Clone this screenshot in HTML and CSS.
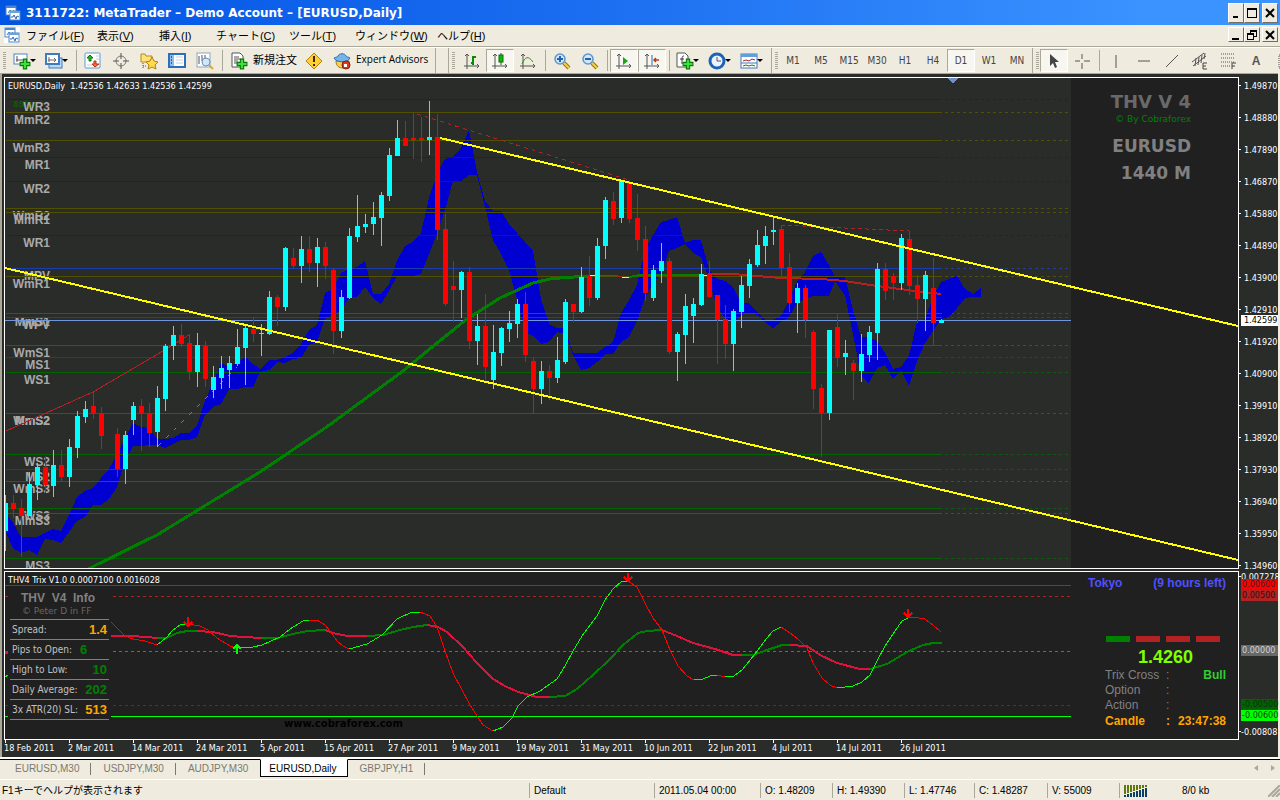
FILE: index.html
```html
<!DOCTYPE html>
<html lang="ja">
<head>
    <meta charset="UTF-8">
    <meta name="viewport" content="width=device-width, initial-scale=1.0">
    <title>3111722: MetaTrader - Demo Account - [EURUSD,Daily]</title>
    <link rel="stylesheet" href="styles.css">
</head>
<body>
    <svg class="defs" aria-hidden="true">
        <symbol id="app" viewBox="0 0 16 16">
            <rect x="1" y="1" width="10" height="9" fill="#fff" stroke="#4a86c8"/>
            <rect x="1" y="1" width="10" height="2" fill="#4a86c8"/>
            <path d="M3 8l2-3 2 2 2-2" fill="none" stroke="#4a86c8"/>
            <rect x="5" y="6" width="10" height="9" fill="#fff" stroke="#4a86c8"/>
            <rect x="5" y="6" width="10" height="2" fill="#6ba3dc"/>
            <path d="M6 12h2l1-2 2 4 1-3 2 1" fill="none" stroke="#2b66aa"/>
        </symbol>
        <symbol id="plus" viewBox="0 0 11 11">
            <path d="M4 1h3v3h3v3H7v3H4V7H1V4h3z" fill="#3ee03e" stroke="#0a7a0a"/>
        </symbol>
        <symbol id="axes" viewBox="0 0 18 18">
            <path d="M4 2v15M1 14h15M2 4l2-2 2 2M14 12l2 2-2 2" fill="none" stroke="#555"/>
        </symbol>
        <symbol id="lens" viewBox="0 0 18 18">
            <path d="M11 11l5 5" stroke="#9a7410" stroke-width="4"/>
            <path d="M11 11l5 5" stroke="#f5cf4a" stroke-width="2"/>
            <circle cx="7" cy="7" r="5" fill="#cfe6fb" stroke="#5b97d0" stroke-width="1.500"/>
        </symbol>
    </svg>

    <header class="titlebar">
        <svg class="app-icon" viewBox="0 0 16 16"><use href="#app"/></svg>
        <h1>3111722: MetaTrader – Demo Account – [EURUSD,Daily]</h1>
        <div class="window-buttons">
            <button aria-label="Minimize"><svg viewBox="0 0 12 12"><path d="M3 9h5v2H3z"/></svg></button>
            <button aria-label="Maximize"><svg viewBox="0 0 12 12"><path d="M1 1h10v10H1zM2 3v7h8V3z" fill-rule="evenodd"/></svg></button>
            <button class="close" aria-label="Close"><svg viewBox="0 0 12 12"><path d="M2 2l8 8M10 2l-8 8" stroke="#000" stroke-width="2"/></svg></button>
        </div>
    </header>

    <nav class="menubar">
        <svg class="app-icon boxed" viewBox="0 0 16 16"><use href="#app"/></svg>
        <div class="menus">
            <button>ファイル(<u>F</u>)</button>
            <button>表示(<u>V</u>)</button>
            <button>挿入(<u>I</u>)</button>
            <button>チャート(<u>C</u>)</button>
            <button>ツール(<u>T</u>)</button>
            <button>ウィンドウ(<u>W</u>)</button>
            <button>ヘルプ(<u>H</u>)</button>
        </div>
        <div class="window-buttons small">
            <button aria-label="Minimize chart"><svg viewBox="0 0 12 12"><path d="M2 9h7v2H2z"/></svg></button>
            <button aria-label="Restore chart"><svg viewBox="0 0 12 12"><path d="M4 1h7v7H8V7h2V3H5v1H4zM1 4h7v7H1zM2 6v4h5V6z" fill-rule="evenodd"/></svg></button>
            <button class="close" aria-label="Close chart"><svg viewBox="0 0 12 12"><path d="M2 2l8 8M10 2l-8 8" stroke="#000" stroke-width="2"/></svg></button>
        </div>
    </nav>

    <div class="toolbar">
        <div class="group">
            <button class="drop" aria-label="New chart"><svg viewBox="0 0 18 18"><rect x="1" y="2" width="13" height="10" fill="#fff" stroke="#4a86c8"/><path d="M4 4v6M3 8h8" stroke="#555"/><use href="#plus" x="6" y="6" width="12" height="12"/></svg></button>
            <button class="drop" aria-label="Profiles"><svg viewBox="0 0 18 18"><rect x="4" y="6" width="13" height="10" fill="#bcd8f4" stroke="#3d7cc0"/><rect x="1" y="2" width="13" height="10" fill="#fff" stroke="#3d7cc0" stroke-width="2"/><path d="M4 5v5M3 8h8M9 6l2 2-2 2" fill="none" stroke="#666"/></svg></button>
            <i class="sep"></i>
            <button aria-label="Market watch"><svg viewBox="0 0 18 18"><rect x="1" y="1" width="15" height="15" rx="1" fill="#fff" stroke="#5b9bdc"/><path d="M3 4h4M3 13h5M12 4h3M12 7h3" stroke="#c9ccd4"/><path d="M6 3l3 3H7v3H5V6H3z" fill="#25b525" stroke="#0e7a0e"/><path d="M11 15l-3-3h2V9h2v3h3z" fill="#f06a42" stroke="#b8371a"/></svg></button>
            <button aria-label="Data window"><svg viewBox="0 0 18 18"><circle cx="9" cy="9" r="5" fill="none" stroke="#777"/><path d="M9 1v6M9 11v6M1 9h6M11 9h6" stroke="#555"/></svg></button>
            <button aria-label="Navigator"><svg viewBox="0 0 18 18"><path d="M1 2h4l1 2h6v6H1z" fill="#ffe27a" stroke="#b98a1a"/><path d="M3 11v6M3 14h3" stroke="#555" stroke-dasharray="1 1"/><path d="M12 5l2 4 4 1-3 3 1 4-4-2-4 2 1-4-3-3 4-1z" fill="#ffdc4e" stroke="#b07e10"/></svg></button>
            <button aria-label="Terminal"><svg viewBox="0 0 18 18"><rect x="1" y="2" width="16" height="13" fill="#fff" stroke="#2f6fb8" stroke-width="2"/><path d="M2 3h4v11H2z" fill="#8fbdf0"/><path d="M3 5h1M3 8h1M3 11h1" stroke="#000"/><path d="M8 5h7M8 8h7M8 11h7" stroke="#c5cfdb"/></svg></button>
            <button aria-label="Strategy tester"><svg viewBox="0 0 18 18"><rect x="1" y="1" width="13" height="14" fill="#fff" stroke="#8aa7c8"/><path d="M3 4v8M6 3v6M9 3v4" stroke="#555"/><path d="M13 13l4 4" stroke="#e0a92a" stroke-width="2"/><circle cx="10" cy="10" r="4" fill="#cfe6fb" stroke="#6b8fb5"/></svg></button>
            <i class="sep"></i>
            <button class="wide order"><svg viewBox="0 0 18 18"><path d="M2 1h8l3 3v11H2z" fill="#fff" stroke="#555"/><path d="M4 5h5M4 7h7M4 9h4M4 11h4" stroke="#555"/><use href="#plus" x="6" y="6" width="12" height="12"/></svg><span>新規注文</span></button>
            <button aria-label="MetaEditor"><svg viewBox="0 0 18 18"><path d="M9 1l8 8-8 8-8-8z" fill="#ffcf33" stroke="#b58411"/><path d="M9 4v6M9 12v2" stroke="#3c2c00" stroke-width="2"/></svg></button>
            <button class="wide experts"><svg viewBox="0 0 18 18"><path d="M3 9c0 5 3 7 7 7s6-3 6-7z" fill="#f7cf52" stroke="#a67a12"/><path d="M1 6c2-1 4-1 4-2 1-3 7-3 8 0 0 1 3 1 4 2-2 5-14 5-16 0z" fill="#74b4ea" stroke="#2d6faf"/><circle cx="13" cy="13" r="4" fill="#e03a1a" stroke="#8e1a06"/><path d="M11 12h3v3h-3z" fill="#fff"/></svg><span>Expert Advisors</span></button>
        </div>
        <div class="group charts-group">
            <button aria-label="Bar chart"><svg viewBox="0 0 18 18"><use href="#axes"/><path d="M10 4v9M10 5h3M8 11h2" stroke="#0a8a0a" stroke-width="2"/></svg></button>
            <button class="pressed" aria-label="Candlesticks"><svg viewBox="0 0 18 18"><use href="#axes"/><path d="M10 1v12" stroke="#067006"/><rect x="8" y="3" width="4" height="7" fill="#14b414" stroke="#067006"/></svg></button>
            <button aria-label="Line chart"><svg viewBox="0 0 18 18"><use href="#axes"/><path d="M3 12c3-7 6-9 11-2" fill="none" stroke="#1c9a1c"/></svg></button>
            <i class="sep"></i>
            <button aria-label="Zoom in"><svg viewBox="0 0 18 18"><use href="#lens"/><path d="M4 7h6M7 4v6" stroke="#2563a8" stroke-width="2"/></svg></button>
            <button aria-label="Zoom out"><svg viewBox="0 0 18 18"><use href="#lens"/><path d="M4 7h6" stroke="#2563a8" stroke-width="2"/></svg></button>
            <i class="sep"></i>
            <button class="pressed" aria-label="Auto scroll"><svg viewBox="0 0 18 18"><use href="#axes"/><path d="M8 5l5 4-5 4z" fill="#19a519"/></svg></button>
            <button class="pressed" aria-label="Chart shift"><svg viewBox="0 0 18 18"><use href="#axes"/><path d="M9 3v10" stroke="#2a6ab0"/><path d="M16 8h-5M13 6l-2 2 2 2" fill="none" stroke="#c03a10" stroke-width="1.500"/></svg></button>
            <i class="sep"></i>
            <button class="drop" aria-label="Indicators"><svg viewBox="0 0 18 18"><path d="M1 1h8l3 3v11H1z" fill="#fff" stroke="#555"/><path d="M8 4c-2 0-2 1-2 8M4 7h4" fill="none" stroke="#333"/><use href="#plus" x="6" y="6" width="12" height="12"/></svg></button>
            <button class="drop" aria-label="Periods"><svg viewBox="0 0 18 18"><circle cx="9" cy="9" r="7" fill="#e9f4ff" stroke="#1f63b8" stroke-width="3"/><path d="M9 5v4h4" fill="none" stroke="#555"/></svg></button>
            <button class="drop" aria-label="Templates"><svg viewBox="0 0 18 18"><rect x="1" y="2" width="16" height="14" fill="#fff" stroke="#3d7cc0"/><path d="M1 2h16v3H1z" fill="#5f9fe0"/><path d="M3 9l3-1 3 1 3-2 3 1" fill="none" stroke="#b52020"/><path d="M1 11h16" stroke="#3d7cc0"/><path d="M3 14l3-1 3 1 3-1 3 1" fill="none" stroke="#128a12"/></svg></button>
        </div>
        <div class="group periods">
            <button>M1</button>
            <button>M5</button>
            <button>M15</button>
            <button>M30</button>
            <button>H1</button>
            <button>H4</button>
            <button class="pressed">D1</button>
            <button>W1</button>
            <button>MN</button>
        </div>
        <div class="group tools">
            <button class="pressed" aria-label="Cursor"><svg viewBox="0 0 18 18"><path d="M5 2v12l3-3 2 5 2-1-2-5h4z" fill="#444"/></svg></button>
            <button aria-label="Crosshair"><svg viewBox="0 0 18 18"><path d="M9 2v5M9 11v6M2 9h5M11 9h6" stroke="#555"/></svg></button>
            <i class="sep"></i>
            <button aria-label="Vertical line"><svg viewBox="0 0 18 18"><path d="M9 3v13" stroke="#555"/></svg></button>
            <button aria-label="Horizontal line"><svg viewBox="0 0 18 18"><path d="M3 9h12" stroke="#555"/></svg></button>
            <button aria-label="Trendline"><svg viewBox="0 0 18 18"><path d="M3 15L15 3" stroke="#555"/></svg></button>
            <button aria-label="Channel"><svg viewBox="0 0 18 18"><path d="M1 10L13 1M2 14L15 4M5 6l-1 8M8 5l-1 8M11 3l-1 8M14 1l-1 6" stroke="#555"/><path d="M12 17v-6h4M12 14h3M12 17h4" fill="none" stroke="#444"/></svg></button>
            <button aria-label="Fibonacci"><svg viewBox="0 0 18 18"><path d="M2 2h14M2 6h14M2 10h14M2 14h9" stroke="#555" stroke-dasharray="1 1"/><path d="M13 17v-6h4M13 14h3" fill="none" stroke="#444"/></svg></button>
            <button aria-label="Text"><b>A</b></button>
            <button aria-label="Text label"><svg viewBox="0 0 18 18"><rect x="4" y="3" width="13" height="13" fill="none" stroke="#555" stroke-dasharray="1 1"/></svg></button>
        </div>
    </div>

    <main class="workspace">
        <section class="pane price-pane">
            <ul class="pivots" id="pivots"></ul>
            <svg class="plot" viewBox="5 78 1233 490" preserveAspectRatio="none">
                <rect x="1071" y="78" width="167" height="490" fill="#202020"/>
                <g id="levels"></g>
                <polygon id="cloud" fill="#0000d0"/>
                <g id="overLevels"></g>
                <g class="ma">
                    <polyline stroke="#008000" stroke-width="3" points="88,569 157,535 260,472 328,426 403,371 437,343 467,319 500,298 533,283 550,279 560,278 589,276"/>
                    <path stroke="#ffff00" stroke-width="1" d="M590 275H596M622 277H629M702 275H708"/>
                    <path stroke="#b22222" stroke-width="1" d="M596 275H614L622 277"/>
                    <path stroke="#008000" stroke-width="2" d="M629 277L640 275H702"/>
                    <polyline stroke="#b22222" stroke-width="2" points="708,274 733,274 757,276 781,278 821,279 845,281 870,285 885,287 915,291 941,294"/>
                </g>
                <g class="trend">
                    <polyline stroke="#b22222" points="6,431 93,392 163,351 189,335"/>
                    <path stroke="#2f8fe8" stroke-dasharray="4 7" d="M158 446L237 367"/>
                    <path stroke="#b22222" stroke-dasharray="4 4" d="M417 114L629 180"/>
                    <path stroke="#b22222" stroke-dasharray="4 3" d="M781 225L909 231"/>
                </g>
                <g id="candles"></g>
                <g class="channel">
                    <path d="M440 138L1238 326"/>
                    <path d="M5 268L1238 560"/>
                </g>
                <path d="M947 78h11l-5 5z" fill="#7090c8"/>
            </svg>
            <p class="pane-title">EURUSD,Daily&nbsp; 1.42536 1.42633 1.42536 1.42599</p>
            <div class="watermark">
                <strong>THV V 4</strong>
                <small>© By Cobraforex</small>
                <span>EURUSD</span>
                <span>1440 M</span>
            </div>
        </section>
        <ol class="scale" id="priceScale"></ol>

        <section class="pane trix-pane">
            <svg class="plot" viewBox="5 572 1233 167" preserveAspectRatio="none">
                <g class="guides">
                    <path stroke="#ff0000" d="M5 585.500H1071"/>
                    <path stroke="#b22222" stroke-dasharray="3 3" d="M5 596.500H1071"/>
                    <path stroke="#696969" stroke-dasharray="3 3" d="M5 651.500H1071"/>
                    <path stroke="#006400" stroke-dasharray="3 3" d="M5 705.500H1071"/>
                    <path stroke="#00ff00" d="M5 716.500H1071"/>
                </g>
                <rect x="8" y="588" width="103" height="137" fill="#202020"/>
                <path d="M5 651h3v3h-3z" fill="#dc143c"/>
                <path d="M5 677l3-2" stroke="#00ff00"/>
                <g id="slow"></g>
                <g id="fast"></g>
                <g class="arrows">
                    <path stroke="#ff0000" d="M188 617v8M184 622l4 4 4-4"/>
                    <path stroke="#ff0000" d="M628 573v8M624 577l4 4 4-4"/>
                    <path stroke="#ff0000" d="M908 609v8M904 613l4 4 4-4"/>
                    <path stroke="#00ff00" d="M237 654v-8M233 649l4-4 4 4"/>
                </g>
            </svg>
            <p class="pane-title">THV4 Trix V1.0 0.0007100 0.0016028</p>
            <div class="info">
                <h2>THV&nbsp; V4&nbsp; Info</h2>
                <small>© Peter D in FF</small>
                <dl>
                    <div><dt>Spread:</dt><dd class="orange">1.4</dd></div>
                    <div class="near"><dt>Pips to Open:</dt><dd>6</dd></div>
                    <div><dt>High to Low:</dt><dd>10</dd></div>
                    <div><dt>Daily Average:</dt><dd>202</dd></div>
                    <div><dt>3x ATR(20) SL:</dt><dd class="orange">513</dd></div>
                </dl>
            </div>
            <p class="site">www.cobraforex.com</p>
            <div class="session">
                <p class="market"><span>Tokyo</span><span>(9 hours left)</span></p>
                <div class="bars"><i class="up"></i><i></i><i></i><i></i></div>
                <p class="quote">1.4260</p>
                <dl>
                    <dt>Trix Cross</dt><dd>:</dd><dd class="bull">Bull</dd>
                    <dt>Option</dt><dd>:</dd><dd></dd>
                    <dt>Action</dt><dd>:</dd><dd></dd>
                    <dt class="candle">Candle</dt><dd class="candle">:</dd><dd class="candle">23:47:38</dd>
                </dl>
            </div>
        </section>
        <ol class="scale trix-scale" id="trixScale"></ol>

        <ol class="dates" id="dates"></ol>
    </main>

    <nav class="tabs">
        <a href="#">EURUSD,M30</a>
        <a href="#">USDJPY,M30</a>
        <a href="#">AUDJPY,M30</a>
        <a href="#" class="active">EURUSD,Daily</a>
        <a href="#">GBPJPY,H1</a>
        <div class="scrollers">
            <button aria-label="Scroll left"><svg viewBox="0 0 6 8"><path d="M5 1v6L1 4z"/></svg></button>
            <button aria-label="Scroll right"><svg viewBox="0 0 6 8"><path d="M1 1v6l4-3z"/></svg></button>
        </div>
    </nav>

    <footer class="statusbar">
        <span class="help">F1キーでヘルプが表示されます</span>
        <span>Default</span>
        <span>2011.05.04 00:00</span>
        <span>O: 1.48209</span>
        <span>H: 1.49390</span>
        <span>L: 1.47746</span>
        <span>C: 1.48287</span>
        <span>V: 55009</span>
        <span class="traffic">
            <svg viewBox="0 0 24 12"><path d="M0 0h2v9H0zM3 0h2v8H3zM6 0h2v7H6zM9 0h2v6H9zM12 0h2v5h-2zM15 0h2v4h-2zM18 0h2v3h-2zM21 0h2v2h-2z" fill="#5f7a0a"/><path d="M0 10h2v2H0zM3 9h2v3H3zM6 8h2v4H6zM9 7h2v5H9zM12 6h2v6h-2zM15 5h2v7h-2zM18 4h2v8h-2zM21 3h2v9h-2z" fill="#0a3f66"/></svg>
            8/0 kb
            <svg class="grip" viewBox="0 0 12 12"><path d="M0 12L12 0M4 12l8-8M8 12l4-4" stroke="#aca899" stroke-width="2"/></svg>
        </span>
    </footer>

    <script src="script.js"></script>
</body>
</html>
```

FILE: styles.css
```css
* {
    box-sizing: border-box;
}
body {
    margin: 0;
    min-height: 100vh;
    display: flex;
    flex-direction: column;
    background: #efebde;
    color: #000;
    font-family: "Liberation Sans", "Noto Sans CJK JP", sans-serif;
    font-size: 10px;
    overflow-x: hidden;
}
h1, h2, p, ul, ol, dl, dd {
    margin: 0;
    padding: 0;
    list-style: none;
}
button {
    margin: 0;
    padding: 0;
    border: 0;
    background: none;
    color: inherit;
    font: inherit;
}
.defs {
    position: absolute;
    width: 0;
    height: 0;
}

/* title and menu */
.titlebar {
    display: flex;
    align-items: center;
    height: 25px;
    padding: 0 2px 0 5px;
    background: linear-gradient(90deg, #0054e3, #1a6df0 45%, #3a93ff 90%);
}
.titlebar h1 {
    flex: 1;
    margin-left: 5px;
    color: #fff;
    font-family: "DejaVu Sans", sans-serif;
    font-size: 12px;
    white-space: pre;
}
.app-icon {
    width: 16px;
    height: 16px;
}
.boxed {
    background: #fff;
}
.window-buttons {
    display: flex;
}
.window-buttons button {
    display: flex;
    align-items: center;
    justify-content: center;
    width: 16px;
    height: 20px;
    background: #efebde;
    border: 1px solid;
    border-color: #fff #716f64 #716f64 #fff;
}
.window-buttons .close {
    margin-left: 2px;
}
.window-buttons svg {
    width: 12px;
    height: 12px;
}
.window-buttons.small button {
    height: 15px;
}
.menubar {
    display: flex;
    align-items: center;
    height: 22px;
    padding: 0 2px 2px 4px;
    border-bottom: 1px solid #aca899;
}
.menus {
    flex: 1;
    display: grid;
    grid-template-columns: 71px 62px 57px 73px 66px 82px auto;
    justify-content: start;
    margin-left: 6px;
    font-size: 11px;
}
.menus button {
    text-align: left;
    white-space: nowrap;
}

/* toolbar */
.toolbar {
    display: flex;
    height: 26px;
    border-top: 1px solid #fff;
    overflow: hidden;
}
.group {
    position: relative;
    display: flex;
    flex: none;
    padding: 1px 3px 1px 9px;
    border-right: 1px solid #aca899;
}
.group::before {
    content: "";
    position: absolute;
    left: 3px;
    top: 4px;
    width: 3px;
    height: 18px;
    background: repeating-linear-gradient(#aca899 0 1px, #efebde 1px 2px);
}
.charts-group {
    margin-left: 12px;
    border-left: 1px solid #aca899;
}
.periods, .tools {
    padding-left: 7px;
    padding-right: 1px;
}
.tools {
    border-right: 0;
}
.group button {
    display: flex;
    flex: none;
    align-items: center;
    justify-content: center;
    width: 28px;
}
.group svg {
    flex: none;
    width: 18px;
    height: 18px;
}
.group .drop {
    width: 32px;
    justify-content: flex-start;
    padding-left: 4px;
}
.drop::after {
    content: "";
    border: 3px solid transparent;
    border-top-color: #000;
    border-bottom: 0;
    margin-left: -1px;
}
.group .wide {
    justify-content: flex-start;
    padding-left: 5px;
    gap: 5px;
    white-space: nowrap;
}
.wide span {
    padding-bottom: 4px;
}
.group .order {
    width: 75px;
}
.group .experts {
    width: 104px;
}
.order span {
    font-size: 11px;
}
.experts span {
    font-family: "Open Sans", sans-serif;
}
.sep {
    flex: none;
    width: 1px;
    margin: 1px 2px 1px 3px;
    background: #aca899;
}
.group .pressed {
    background: #f8f6f0;
    border: 1px solid;
    border-color: #aca899 #fff #fff #aca899;
}
.periods button {
    color: #444;
    font-family: "DejaVu Sans Condensed", "DejaVu Sans", sans-serif;
}
.tools b {
    color: #555;
    font-size: 12px;
}

/* chart workspace */
.workspace {
    flex: 1;
    display: grid;
    grid-template-columns: 1fr 39px;
    grid-template-rows: minmax(0, 492fr) 2px minmax(0, 169fr) 17px;
    padding: 3px 0 0 2px;
    border: solid #aca899;
    border-width: 1px 0 0 2px;
    margin-right: 2px;
    background: #2a2c2a;
    color: #fff;
    font-family: "DejaVu Sans Condensed", "DejaVu Sans", sans-serif;
    font-size: 9px;
    line-height: 12px;
}
.pane {
    position: relative;
    min-height: 0;
    border: 1px solid #fff;
    overflow: hidden;
}
.trix-pane {
    grid-row: 3;
    background: #202020;
}
.plot {
    position: relative;
    display: block;
    width: 100%;
    height: 100%;
    shape-rendering: crispEdges;
}
.plot path, .plot polyline {
    vector-effect: non-scaling-stroke;
}
.ma, .trend, .guides, .arrows, .channel, #slow, #fast {
    fill: none;
}
.channel {
    stroke: #ffff00;
    stroke-width: 2px;
}
#slow {
    stroke-width: 2px;
}
.arrows {
    stroke-width: 2px;
}
.pane-title {
    position: absolute;
    left: 3px;
    top: 2px;
}
.pivots {
    position: absolute;
    left: 0;
    top: 0;
    width: 45px;
    height: 100%;
    color: #a9a9a9;
    font-family: "Liberation Sans", sans-serif;
    font-size: 12px;
    font-weight: bold;
    text-align: right;
}
.pivots li {
    position: absolute;
    right: 0;
    margin-top: -5px;
}
.pivots .mark {
    right: 12px;
    color: #006400;
    font-size: 9px;
}
.watermark {
    position: absolute;
    right: 47px;
    top: 14px;
    display: flex;
    flex-direction: column;
    align-items: flex-end;
    color: #808080;
    font-family: "DejaVu Sans", sans-serif;
    font-size: 17px;
    font-weight: bold;
    line-height: 27px;
}
.watermark strong {
    color: #696969;
    font-size: 18px;
    line-height: 20px;
}
.watermark small {
    margin-bottom: 7px;
    color: #008000;
    font-size: 9px;
    font-weight: normal;
    line-height: 14px;
}
.scale {
    position: relative;
    min-width: 0;
}
.trix-scale {
    grid-row: 3;
}
.scale li {
    position: absolute;
    left: 0;
    width: 100%;
    margin-top: -6px;
    padding-left: 5px;
    white-space: nowrap;
}
.scale .tick::before {
    content: "";
    position: absolute;
    left: 0;
    top: 5px;
    width: 2px;
    height: 1px;
    background: #fff;
}
.scale .tag {
    height: 11px;
    margin-top: -5px;
    left: 2px;
    width: calc(100% - 2px);
    padding-left: 3px;
    line-height: 11px;
}
.trix-scale .tick {
    padding-left: 2px;
}
.trix-scale .tag {
    padding-left: 1px;
}
.dates {
    grid-row: 4;
    display: flex;
    min-width: 0;
}
.dates li {
    position: relative;
    flex: none;
    width: calc(100% * 64 / 1235);
    padding-top: 2px;
    white-space: nowrap;
}
.dates li::before {
    content: "";
    position: absolute;
    left: 1px;
    top: 0;
    width: 1px;
    height: 3px;
    background: #fff;
}

/* info block on the left of the trix pane */
.info {
    position: absolute;
    left: 5px;
    top: 19px;
    width: 101px;
    color: #c0c0c0;
    font-family: "DejaVu Sans", sans-serif;
}
.info h2 {
    padding-left: 11px;
    color: #808080;
    font-family: "Liberation Sans", sans-serif;
    font-size: 12px;
    line-height: 14px;
}
.info small {
    display: block;
    height: 14px;
    padding-left: 12px;
    color: #696969;
    font-size: 9px;
    line-height: 12px;
}
.info dl {
    width: 99px;
    border-top: 1px solid #808080;
}
.info dl div {
    display: flex;
    align-items: center;
    justify-content: space-between;
    height: 20px;
    padding: 0 2px;
    border-bottom: 1px solid #808080;
    white-space: nowrap;
}
.info dl .near {
    justify-content: flex-start;
    gap: 8px;
}
.info dt {
    font-family: "DejaVu Sans Condensed", "DejaVu Sans", sans-serif;
    font-size: 10px;
}
.info dd {
    color: #008000;
    font-family: "Liberation Sans", sans-serif;
    font-size: 13px;
    font-weight: bold;
}
.info .orange {
    color: #ffa500;
}
.site {
    position: absolute;
    left: 279px;
    bottom: 9px;
    color: #000;
    font-family: "DejaVu Sans", sans-serif;
    font-size: 10px;
    font-weight: bold;
}

/* session block on the right */
.session {
    position: absolute;
    right: 12px;
    top: 4px;
    width: 138px;
    font-family: "Liberation Sans", sans-serif;
    font-size: 12px;
    line-height: 15px;
}
.market {
    display: flex;
    justify-content: space-between;
    color: #5050ff;
    font-weight: bold;
}
.bars {
    display: flex;
    justify-content: flex-end;
    gap: 6px;
    margin-top: 45px;
    padding-right: 6px;
}
.bars i {
    width: 24px;
    height: 6px;
    background: #b22222;
}
.bars .up {
    background: #008000;
}
.quote {
    margin: 4px 33px 0 0;
    color: #80ff00;
    font-size: 18px;
    font-weight: bold;
    line-height: 22px;
    text-align: right;
}
.session dl {
    display: grid;
    grid-template-columns: 61px 8px 1fr;
    padding-left: 17px;
    color: #808080;
    grid-auto-rows: 15px;
}
.session dd:nth-of-type(2n) {
    text-align: right;
}
.session .bull {
    color: #32cd32;
    font-weight: bold;
}
.session .candle {
    color: #ffa500;
    font-weight: bold;
    line-height: 17px;
}

/* chart tabs */
.tabs {
    display: flex;
    height: 22px;
    padding: 2px 4px 2px 3px;
    background: linear-gradient(#fff 2px, #000 2px, #000 3px, #efebde 3px);
}
.tabs a {
    position: relative;
    padding: 0 12px;
    color: #7b7970;
    line-height: 19px;
    text-decoration: none;
}
.tabs a::after {
    content: "";
    position: absolute;
    right: 0;
    top: 4px;
    width: 1px;
    height: 12px;
    background: #7b7970;
}
.tabs a:nth-child(3)::after, .tabs .active::after {
    display: none;
}
.tabs .active {
    padding: 0 10px 0 8px;
    background: #fff;
    border: 1px solid #000;
    border-top-color: #fff;
    color: #000;
    line-height: 17px;
}
.scrollers {
    display: flex;
    gap: 11px;
    margin-left: auto;
}
.scrollers svg {
    width: 6px;
    height: 8px;
    fill: #aca899;
}

/* status bar */
.statusbar {
    display: grid;
    grid-template-columns: 1fr 125px 106px 72px 72px 70px 73px 72px 161px;
    height: 21px;
    padding: 3px 0 2px;
    border-top: 1px solid #fff;
    line-height: 15px;
}
.statusbar span {
    padding-left: 4px;
    border-left: 1px solid #aca899;
    white-space: nowrap;
}
.statusbar .help {
    padding-left: 2px;
    border-left: 0;
}
.statusbar .traffic {
    display: flex;
    align-items: center;
    gap: 34px;
}
.traffic svg {
    width: 24px;
    height: 12px;
}
.traffic .grip {
    width: 12px;
    margin-left: auto;
}
```

FILE: script.js
```js
const NS = 'http://www.w3.org/2000/svg';

// x, high, body top, body bottom, low, direction
const candles = [
    [5, 495, 503, 531, 551, 1], [13, 495, 503, 509, 518, 0], [21, 499, 508, 516, 557, 0], [29, 472, 484, 516, 516, 1],
    [37, 463, 467, 485, 500, 1], [45, 456, 467, 485, 493, 0], [53, 450, 465, 486, 497, 1], [61, 450, 465, 477, 481, 0],
    [69, 439, 447, 477, 487, 1], [77, 411, 416, 448, 458, 1], [85, 401, 409, 417, 423, 1], [93, 392, 406, 414, 419, 0],
    [101, 407, 413, 436, 449, 0], [117, 428, 434, 469, 477, 0], [125, 431, 435, 469, 484, 1], [133, 402, 406, 420, 435, 1],
    [141, 399, 406, 414, 451, 0], [149, 403, 413, 433, 447, 0], [157, 386, 398, 432, 447, 1], [165, 344, 346, 399, 411, 1],
    [173, 326, 335, 346, 360, 1], [181, 324, 335, 344, 347, 0], [189, 334, 343, 372, 380, 0], [197, 333, 345, 372, 387, 1],
    [205, 341, 346, 379, 387, 0], [213, 366, 377, 390, 398, 1], [221, 356, 368, 378, 389, 1], [229, 356, 363, 370, 388, 1],
    [237, 329, 347, 364, 366, 1], [245, 324, 328, 348, 385, 1], [253, 317, 329, 334, 342, 0], [261, 324, 333, 334, 356, 1],
    [269, 291, 297, 334, 335, 1], [277, 295, 297, 307, 326, 0], [285, 247, 248, 307, 311, 1], [293, 248, 258, 266, 269, 0],
    [301, 236, 249, 266, 283, 1], [309, 236, 249, 263, 272, 0], [317, 238, 247, 263, 287, 1], [325, 242, 247, 266, 279, 0],
    [333, 268, 270, 331, 354, 0], [341, 290, 297, 331, 338, 1], [349, 228, 236, 298, 299, 1], [357, 195, 226, 237, 242, 1],
    [365, 214, 224, 227, 233, 1], [373, 202, 217, 224, 235, 1], [381, 192, 195, 218, 246, 1], [389, 148, 155, 196, 201, 1],
    [397, 120, 138, 156, 156, 1], [405, 121, 138, 146, 146, 0], [413, 113, 138, 140, 159, 0], [421, 117, 138, 140, 162, 0],
    [429, 101, 137, 140, 155, 1], [437, 114, 137, 230, 240, 0], [445, 214, 229, 304, 306, 0], [453, 261, 286, 290, 322, 0],
    [461, 271, 272, 290, 318, 1], [469, 267, 272, 341, 349, 0], [477, 314, 326, 341, 365, 1], [485, 294, 326, 367, 383, 0],
    [493, 325, 352, 380, 389, 1], [501, 327, 328, 353, 366, 1], [509, 311, 323, 329, 342, 1], [517, 299, 304, 324, 338, 1],
    [525, 292, 304, 355, 362, 0], [533, 357, 361, 389, 414, 0], [541, 361, 371, 389, 404, 1], [549, 365, 371, 378, 400, 0],
    [557, 337, 360, 378, 383, 1], [565, 299, 302, 362, 364, 1], [573, 304, 304, 312, 322, 0], [581, 267, 277, 312, 313, 1],
    [589, 256, 276, 298, 306, 0], [597, 238, 246, 298, 300, 1], [605, 197, 200, 246, 259, 1], [613, 192, 201, 219, 225, 0],
    [621, 180, 181, 218, 223, 1], [629, 180, 182, 219, 223, 0], [637, 194, 218, 240, 251, 0], [645, 226, 239, 293, 301, 0],
    [653, 265, 270, 298, 301, 1], [661, 243, 261, 271, 283, 1], [669, 258, 261, 352, 354, 0], [677, 332, 334, 352, 381, 1],
    [685, 294, 306, 335, 364, 1], [693, 298, 304, 316, 343, 1], [701, 264, 274, 305, 306, 1], [709, 261, 274, 297, 298, 0],
    [717, 295, 295, 320, 364, 0], [725, 305, 319, 344, 359, 0], [733, 309, 311, 344, 371, 1], [741, 276, 285, 312, 328, 1],
    [749, 259, 264, 286, 298, 1], [757, 230, 245, 265, 267, 1], [765, 226, 236, 246, 264, 1], [773, 216, 230, 232, 245, 1],
    [781, 225, 229, 268, 278, 0], [789, 253, 267, 303, 312, 0], [797, 283, 288, 303, 333, 1], [805, 285, 288, 320, 338, 0],
    [813, 330, 332, 389, 409, 0], [821, 384, 388, 413, 457, 0], [829, 330, 330, 413, 420, 1], [837, 314, 327, 358, 367, 0],
    [845, 340, 353, 357, 375, 1], [853, 360, 363, 371, 400, 0], [861, 334, 354, 371, 382, 1], [869, 326, 332, 355, 362, 1],
    [877, 263, 269, 333, 360, 1], [885, 263, 269, 291, 300, 0], [893, 273, 276, 283, 300, 0], [901, 234, 238, 283, 290, 1],
    [909, 231, 239, 286, 295, 0], [917, 275, 285, 299, 323, 0], [925, 271, 275, 299, 331, 1], [933, 258, 288, 323, 345, 0],
    [941, 319, 320, 323, 323, 1]
];

// x, upper edge, lower edge
const cloud = [
    [5, 512, 530], [13, 523, 547], [21, 537, 552], [29, 537, 549], [37, 537, 554], [45, 533, 538], [53, 529, 539],
    [61, 531, 542], [69, 515, 531], [77, 497, 520], [85, 491, 516], [93, 488, 504], [101, 478, 504], [109, 469, 498],
    [117, 455, 486], [125, 438, 460], [133, 423, 445], [141, 427, 445], [149, 428, 444], [157, 439, 444], [165, 439, 447],
    [173, 438, 443], [181, 433, 439], [189, 433, 439], [197, 426, 436], [205, 400, 414], [213, 383, 406], [221, 363, 403],
    [229, 367, 388], [237, 363, 388], [245, 357, 386], [253, 364, 386], [260, 369, 371], [269, 360, 369], [277, 360, 361],
    [285, 357, 362], [293, 353, 358], [301, 344, 357], [309, 330, 344], [317, 325, 341], [325, 293, 318], [333, 289, 314],
    [341, 273, 309], [349, 269, 297], [357, 267, 296], [365, 261, 286], [373, 294, 297], [381, 294, 303], [389, 284, 290],
    [397, 261, 275], [405, 246, 275], [413, 242, 275], [421, 233, 273], [429, 198, 253], [437, 173, 233], [445, 159, 209],
    [453, 157, 180], [461, 148, 180], [469, 130, 174], [477, 172, 174], [485, 201, 206], [493, 211, 239], [501, 211, 253],
    [509, 224, 269], [517, 233, 298], [525, 242, 331], [533, 251, 335], [541, 299, 343], [549, 324, 341], [557, 328, 331],
    [565, 328, 333], [573, 353, 354], [581, 353, 369], [589, 353, 367], [597, 353, 361], [605, 347, 353], [613, 342, 353],
    [621, 313, 341], [629, 300, 336], [637, 285, 320], [645, 250, 297], [653, 235, 283], [661, 222, 272], [669, 220, 250],
    [677, 217, 247], [685, 243, 243], [693, 240, 252], [701, 240, 256], [709, 269, 278], [717, 279, 307], [725, 281, 317],
    [733, 287, 322], [741, 303, 314], [749, 303, 312], [757, 312, 314], [765, 320, 321], [773, 320, 327], [781, 316, 321],
    [789, 300, 316], [797, 282, 302], [805, 272, 298], [813, 256, 295], [821, 252, 295], [829, 265, 295], [835, 277, 280],
    [845, 277, 295], [853, 310, 333], [861, 337, 375], [869, 337, 382], [877, 341, 367], [885, 353, 364], [893, 369, 378],
    [901, 367, 369], [909, 355, 385], [917, 322, 360], [925, 319, 342], [933, 297, 330], [941, 282, 318], [949, 279, 316],
    [957, 276, 307], [965, 289, 297], [973, 294, 296], [981, 288, 296]
];

const levelColors = { r: '#780000', o: '#505000', g: '#006400', b: '#1a3cae' };
const levels = [
    [99, 'r'], [112, 'o'], [140, 'o'], [157, 'r'], [181, 'r'], [208, 'o'], [212, 'o'], [235, 'r'], [268, 'b'],
    [276, 'o'], [313, 'o'], [317, 'b'], [345, 'o'], [357, 'g'], [372, 'g'], [413, 'o'], [454, 'g'], [469, 'g'],
    [481, 'o'], [508, 'g'], [513, 'o'], [558, 'g']
];

const pivots = [
    ['WR3', 106], ['MmR2', 119], ['WmR3', 147], ['MR1', 164], ['WR2', 188], ['WmR2', 215], ['MmR1', 219], ['WR1', 242],
    ['MPV', 275], ['WmR1', 283], ['MmS1', 321], ['WPV', 324], ['WmS1', 352], ['MS1', 364], ['WS1', 379], ['WmS2', 420],
    ['MmS2', 420], ['WS2', 461], ['MS2', 476], ['WmS3', 488], ['WS3', 515], ['MmS3', 520], ['MS3', 565]
];

// trix lines: every segment starts where the previous one ends
const slow = [
    ['d', '111,636 132,636 145,637 158,638'],
    ['u', '167,638 177,633 187,631 197,631'],
    ['d', '213,632 230,636 243,637 262,638'],
    ['u', '278,638 293,634 307,631 325,630'],
    ['d', '333,633 347,636 367,636'],
    ['u', '383,635 400,630 413,627 427,625'],
    ['d', '438,627 447,632 462,646 477,663 493,679 505,686 518,692 537,697 550,697'],
    ['u', '565,696 577,689 593,675 610,659 623,645 638,633 647,631 662,630'],
    ['d', '677,636 693,643 715,649 733,655 742,655'],
    ['u', '753,655 767,650 782,645 789,645'],
    ['d', '807,646 820,655 837,663 860,669 870,669'],
    ['u', '887,664 907,652 923,645 933,643 942,643']
];
const fast = [
    ['d', '111,622 125,636 133,639 145,641 157,645'],
    ['u', '167,637 173,630 180,625 187,624'],
    ['d', '200,626 208,630 217,638 230,646 235,648'],
    ['u', '253,647 262,645 280,637 290,629 303,621 309,620'],
    ['d', '317,620 325,625 330,631 337,641 343,646 349,649'],
    ['u', '367,644 382,635 397,619 412,612 420,612'],
    ['d', '430,616 437,627 445,651 453,673 470,705 483,725 493,731'],
    ['u', '503,727 512,718 518,706 527,697 540,691 557,679 565,666 573,651 582,636 597,616 605,600 613,589 622,581 628,581'],
    ['d', '637,587 645,603 653,618 662,630 670,650 678,666 687,676 694,680'],
    ['u', '703,679 710,676 717,675'],
    ['d', '725,677'],
    ['u', '734,676 742,670 755,654 767,638 773,631 781,627'],
    ['d', '790,633 798,639 807,648 813,663 822,678 830,685 837,688'],
    ['u', '853,686 862,682 870,675 877,661 885,646 893,634 902,621 908,618'],
    ['d', '913,617 925,619 933,625 941,632']
];

const prices = ['1.49870', '1.48880', '1.47890', '1.46870', '1.45880', '1.44890', '1.43900', '1.42910',
    '1.41920', '1.40900', '1.39910', '1.38920', '1.37930', '1.36940', '1.35950', '1.34960'];

const days = ['18 Feb 2011', '2 Mar 2011', '14 Mar 2011', '24 Mar 2011', '5 Apr 2011', '15 Apr 2011', '27 Apr 2011',
    '9 May 2011', '19 May 2011', '31 May 2011', '10 Jun 2011', '22 Jun 2011', '4 Jul 2011', '14 Jul 2011', '26 Jul 2011'];

function byId(id) {
    return document.getElementById(id);
}

function shape(parent, name, attrs) {
    const el = document.createElementNS(NS, name);
    for (const key in attrs) el.setAttribute(key, attrs[key]);
    parent.appendChild(el);
    return el;
}

function label(parent, text, y, className) {
    const li = document.createElement('li');
    li.textContent = text;
    if (className) li.className = className;
    if (y !== null) li.style.top = y + '%';
    parent.appendChild(li);
    return li;
}

// pivot levels: solid over the history, dashed in the shift area
levels.forEach(([y, c]) => {
    const stroke = levelColors[c];
    shape(byId('levels'), 'path', { d: `M945 ${y + 0.5}H1070`, stroke, 'stroke-dasharray': '3 3' });
    shape(byId('overLevels'), 'path', { d: `M6 ${y + 0.5}H942`, stroke });
});
shape(byId('overLevels'), 'path', { d: 'M5 320.5H1071', stroke: '#7095dc' });

const upper = cloud.map(([x, a]) => `${x},${a}`);
const lower = cloud.map(([x, , b]) => `${x},${b + 1}`).reverse();
byId('cloud').setAttribute('points', upper.concat(lower).join(' '));

candles.forEach(([x, high, t, b, low, up]) => {
    const fill = up ? '#00ffff' : '#ff0000';
    shape(byId('candles'), 'rect', { x, y: high, width: 1, height: Math.max(low - high, 1), fill });
    shape(byId('candles'), 'rect', { x: x - 2, y: t, width: 5, height: Math.max(b - t, 1), fill });
});

function drawTrix(id, segments, colors) {
    let last = '';
    segments.forEach(([dir, points]) => {
        shape(byId(id), 'polyline', { points: (last + ' ' + points).trim(), stroke: colors[dir] });
        last = points.split(' ').pop();
    });
}
drawTrix('slow', slow, { d: '#dc143c', u: '#008000' });
drawTrix('fast', fast, { d: '#ff0000', u: '#00ff00' });

label(byId('pivots'), '8S/pu', (103 - 78) / 490 * 100, 'mark');
pivots.forEach(([name, y]) => label(byId('pivots'), name, (y - 78) / 490 * 100));

prices.forEach((price, i) => label(byId('priceScale'), price, (9 + i * 32) / 492 * 100, 'tick'));
const current = label(byId('priceScale'), '1.42599', 243 / 492 * 100, 'tag');
current.style.background = '#fff';
current.style.color = '#000';

[
    ['0.007278', 577, '', '#fff'],
    ['0.00600', 584, '#ff0000', '#402020'],
    ['0.00500', 595, '#b22222', '#301010'],
    ['0.00000', 650, '#696969', '#d0d0d0'],
    ['-0.00500', 704, '#006400', '#103010'],
    ['-0.00600', 715, '#00ff00', '#104010'],
    ['-0.00808', 732, '', '#fff']
].forEach(([text, y, background, color]) => {
    const li = label(byId('trixScale'), text, (y - 571) / 169 * 100, background ? 'tag' : 'tick');
    li.style.background = background;
    li.style.color = color;
});

days.forEach(day => label(byId('dates'), day, null));
```
